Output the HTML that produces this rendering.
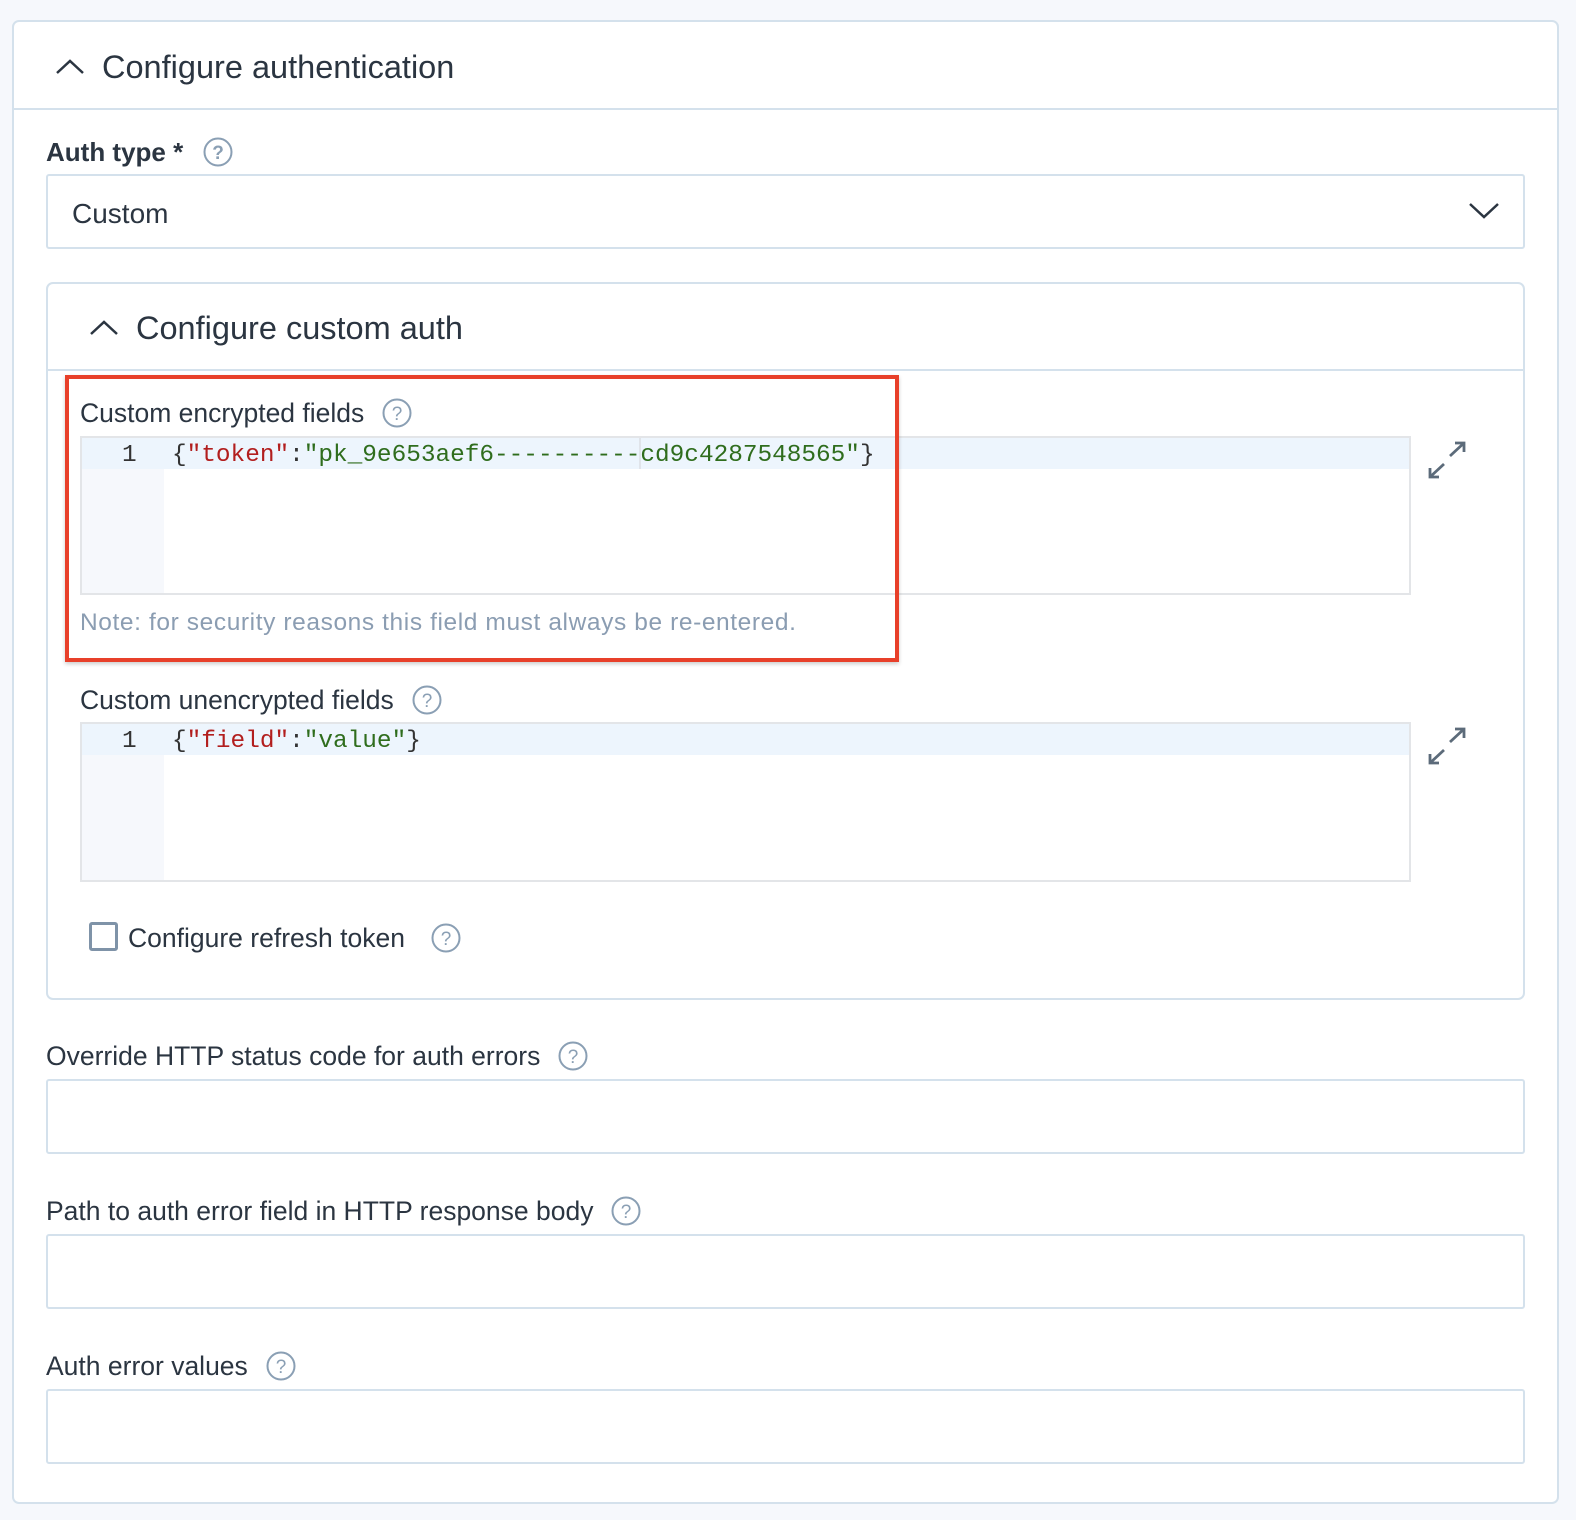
<!DOCTYPE html>
<html><head><meta charset="utf-8"><style>
*{box-sizing:border-box;margin:0;padding:0}
body{width:1576px;height:1520px;background:#f6f8fc;position:relative;overflow:hidden;font-family:"Liberation Sans",sans-serif;color:#2b3541}
.a{position:absolute}
.card{position:absolute;background:#fff;border:2px solid #d4e1ec;border-radius:7px}
.sep{position:absolute;height:2px;background:#d4e1ec}
.t{position:absolute;white-space:nowrap;line-height:1;display:flex;align-items:center}
.lbl{font-size:26.5px;color:#2b3541}
.q{display:inline-block;width:30px;height:30px;margin-left:18px;flex:none}
.inp{position:absolute;background:#fff;border:2px solid #d4e1ec;border-radius:3px}
.ed{position:absolute;background:#fff;border:2px solid #e3e5e8}
.gut{position:absolute;left:0;top:0;bottom:0;width:82px;background:#f6f8fc}
.act{position:absolute;left:0;right:0;top:0;height:31px;background:#edf5fd}
.code{position:absolute;font-family:"Liberation Mono",monospace;font-size:24.4px;line-height:31px;white-space:pre;color:#333}
.r{color:#b21e1e}.g{color:#2f6d1d}
</style></head><body>
<svg width="0" height="0" style="position:absolute"><defs><g id="q"><circle cx="15" cy="15" r="13.5" fill="none" stroke="#8a9fb4" stroke-width="2"/><text x="15" y="22" text-anchor="middle" font-family="Liberation Sans" font-size="19" fill="#8a9fb4">?</text></g></defs></svg>
<div class="card" style="left:12px;top:20px;width:1547px;height:1484px"></div>
<div class="sep" style="left:14px;top:108px;width:1543px"></div>
<svg class="a" style="left:54px;top:55px" width="32" height="24"><path d="M3 18 L16 6 L29 18" fill="none" stroke="#2b3541" stroke-width="2.5"/></svg>
<div class="t" style="left:102px;top:51px;font-size:32.5px">Configure authentication</div>

<div class="t" style="left:46px;top:137px;font-size:26px;font-weight:bold">Auth type *<svg class="q" style="margin-left:20px"><use href="#q"/></svg></div>
<div class="inp" style="left:46px;top:174px;width:1479px;height:75px"></div>
<div class="t" style="left:72px;top:200px;font-size:28px">Custom</div>
<svg class="a" style="left:1467px;top:200px" width="34" height="22"><path d="M3 4 L17 17 L31 4" fill="none" stroke="#2b3541" stroke-width="2.5"/></svg>

<div class="card" style="left:46px;top:282px;width:1479px;height:718px"></div>
<div class="sep" style="left:48px;top:369px;width:1475px"></div>
<svg class="a" style="left:88px;top:316px" width="32" height="24"><path d="M3 18 L16 6 L29 18" fill="none" stroke="#2b3541" stroke-width="2.5"/></svg>
<div class="t" style="left:136px;top:312px;font-size:32.5px">Configure custom auth</div>

<div class="t lbl" style="left:80px;top:398px">Custom encrypted fields<svg class="q"><use href="#q"/></svg></div>
<div class="ed" style="left:80px;top:436px;width:1331px;height:159px"><div class="act"></div><div class="gut" style="top:31px"></div>
<div class="code" style="left:40px;top:2px">1</div>
<div class="code" style="left:90px;top:2px">{<span class="r">"token"</span>:<span class="g">"pk_9e653aef6----------cd9c4287548565"</span>}</div>
<div class="a" style="left:557px;top:0;width:2px;height:31px;background:#e0e4ea"></div></div>
<svg class="a" style="left:1426px;top:440px" width="44" height="42"><path d="M24 16 L38 3 M29 3 L38 3 L38 12 M18 24 L4 37 M4 28 L4 37 L13 37" fill="none" stroke="#5c6b7a" stroke-width="2.8"/></svg>
<div class="t" style="left:80px;top:611px;font-size:24.5px;color:#8b9db2;letter-spacing:0.6px">Note: for security reasons this field must always be re-entered.</div>
<div class="a" style="left:65px;top:375px;width:834px;height:287px;border:4px solid #e8402a;box-shadow:0 2px 4px rgba(0,0,0,0.2)"></div>

<div class="t lbl" style="left:80px;top:685px">Custom unencrypted fields<svg class="q"><use href="#q"/></svg></div>
<div class="ed" style="left:80px;top:722px;width:1331px;height:160px"><div class="act"></div><div class="gut" style="top:31px"></div>
<div class="code" style="left:40px;top:2px">1</div>
<div class="code" style="left:90px;top:2px">{<span class="r">"field"</span>:<span class="g">"value"</span>}</div></div>
<svg class="a" style="left:1426px;top:726px" width="44" height="42"><path d="M24 16 L38 3 M29 3 L38 3 L38 12 M18 24 L4 37 M4 28 L4 37 L13 37" fill="none" stroke="#5c6b7a" stroke-width="2.8"/></svg>

<div class="a" style="left:89px;top:922px;width:29px;height:29px;border:3px solid #7f93a8;border-radius:3px;background:#fff"></div>
<div class="t lbl" style="left:128px;top:923px">Configure refresh token<svg class="q" style="margin-left:26px"><use href="#q"/></svg></div>

<div class="t lbl" style="left:46px;top:1041px">Override HTTP status code for auth errors<svg class="q"><use href="#q"/></svg></div>
<div class="inp" style="left:46px;top:1079px;width:1479px;height:75px"></div>

<div class="t lbl" style="left:46px;top:1196px">Path to auth error field in HTTP response body<svg class="q"><use href="#q"/></svg></div>
<div class="inp" style="left:46px;top:1234px;width:1479px;height:75px"></div>

<div class="t lbl" style="left:46px;top:1351px">Auth error values<svg class="q"><use href="#q"/></svg></div>
<div class="inp" style="left:46px;top:1389px;width:1479px;height:75px"></div>
</body></html>
